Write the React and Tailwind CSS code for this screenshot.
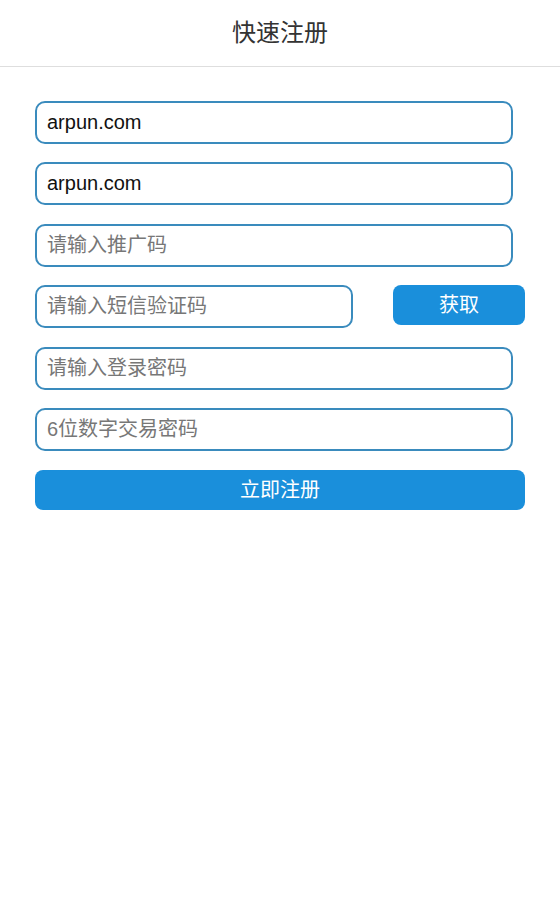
import React from "react";

const font = { fontFamily: '"Liberation Sans", "Noto Sans CJK SC", sans-serif' };

const Field = ({ value, placeholder, className = "w-[478px]" }) => (
  <input
    type="text"
    defaultValue={value}
    placeholder={placeholder}
    className={`${className} h-[43px] rounded-[10px] border-2 border-[#3a8bbd] bg-white px-[10px] text-[20px] text-[#111] outline-none placeholder:text-[#777]`}
  />
);

export default function App() {
  return (
    <div className="min-h-[919px] bg-white" style={font}>
      <header className="flex h-[67px] items-center justify-center border-b border-[#dedede]">
        <h1 className="text-[24px] text-[#333]">快速注册</h1>
      </header>

      <form className="flex flex-col px-[35px] pt-[34px]" onSubmit={(e) => e.preventDefault()}>
        <div className="flex flex-col gap-[18.4px]">
          <Field value="arpun.com" />
          <Field value="arpun.com" />
          <Field placeholder="请输入推广码" />
          <div className="flex items-start justify-between">
            <Field placeholder="请输入短信验证码" className="w-[318px]" />
            <button
              type="button"
              className="h-[40px] w-[132px] rounded-[8px] bg-[#1a8fdb] text-[20px] text-white"
            >
              获取
            </button>
          </div>
          <Field placeholder="请输入登录密码" />
          <Field placeholder="6位数字交易密码" />
        </div>
        <button
          type="submit"
          className="mt-[19px] h-[40px] w-[490px] rounded-[8px] bg-[#1a8fdb] text-[20px] text-white"
        >
          立即注册
        </button>
      </form>
    </div>
  );
}
